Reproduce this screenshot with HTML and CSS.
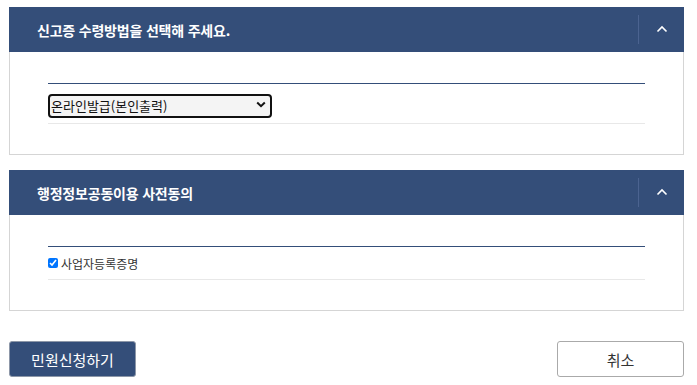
FILE: index.html
```html
<!DOCTYPE html>
<html lang="ko">
<head>
<meta charset="utf-8">
<link rel="stylesheet" href="styles.css">
</head>
<body>
<div class="page">
  <section class="panel">
    <div class="panel-head">
      <h2 class="panel-title">신고증 수령방법을 선택해 주세요.</h2>
      <button class="toggle" type="button" aria-label="접기">
        <svg width="12" height="8" viewBox="0 0 12 8"><path d="M1.5 6.5 L6 2 L10.5 6.5" fill="none" stroke="#fff" stroke-width="1.6"/></svg>
      </button>
    </div>
    <div class="panel-body">
      <div class="field-row">
        <div class="select-wrap">
          <select class="select">
            <option>온라인발급(본인출력)</option>
          </select>
          <svg class="select-arrow" width="10" height="7" viewBox="0 0 10 7"><path d="M1.2 1.5 L5 5.2 L8.8 1.5" fill="none" stroke="#111" stroke-width="2"/></svg>
        </div>
      </div>
    </div>
  </section>

  <section class="panel">
    <div class="panel-head">
      <h2 class="panel-title">행정정보공동이용 사전동의</h2>
      <button class="toggle" type="button" aria-label="접기">
        <svg width="12" height="8" viewBox="0 0 12 8"><path d="M1.5 6.5 L6 2 L10.5 6.5" fill="none" stroke="#fff" stroke-width="1.6"/></svg>
      </button>
    </div>
    <div class="panel-body">
      <div class="field-row check-row">
        <label class="check"><input type="checkbox" checked><span>사업자등록증명</span></label>
      </div>
    </div>
  </section>

  <div class="actions">
    <button class="btn btn-primary" type="button">민원신청하기</button>
    <button class="btn btn-default" type="button">취소</button>
  </div>
</div>
</body>
</html>
```

FILE: styles.css
```css
* { box-sizing: border-box; }
html, body { margin: 0; padding: 0; background: #fff; }
body {
  font-family: "Malgun Gothic", "Noto Sans CJK KR", "Noto Sans", sans-serif;
  color: #333;
}
.page {
  width: 675px;
  margin: 7px 0 0 9px;
}
.panel { margin-bottom: 15px; }
.panel-head {
  height: 45px;
  background: #344e79;
  display: flex;
  align-items: center;
}
.panel-title {
  flex: 1;
  margin: 0;
  padding-left: 28px;
  font-size: 14px;
  font-weight: 700;
  color: #fff;
  line-height: 20px;
  letter-spacing: -0.2px;
}
.toggle {
  width: 46px;
  height: 29px;
  border: 0;
  border-left: 1px solid #4b6390;
  background: transparent;
  padding: 0;
  display: flex;
  align-items: center;
  justify-content: center;
  cursor: pointer;
}
.toggle svg { margin-top: -2px; }
.panel-body {
  border: 1px solid #d5d5d5;
  border-top: 0;
  padding: 31px 38px 30px 38px;
}
.field-row {
  border-top: 1px solid #344e79;
  border-bottom: 1px solid #e8e8e8;
  padding: 8px 0 7px;
  display: flex;
  align-items: center;
}
.select-wrap {
  position: relative;
  width: 224px;
  height: 24px;
}
.select {
  appearance: none;
  -webkit-appearance: none;
  width: 100%;
  height: 100%;
  border: 2px solid #111;
  border-radius: 4px;
  background: #f4f4f4;
  font-family: inherit;
  font-size: 13px;
  color: #111;
  padding: 0 20px 0 1px;
  line-height: 20px;
  outline: none;
}
.select-arrow {
  position: absolute;
  right: 6px;
  top: 9px;
  pointer-events: none;
}
.check-row { height: 34px; padding: 0; }
.check {
  display: flex;
  align-items: center;
  font-size: 12px;
  color: #333;
}
.check input {
  width: 10px;
  height: 10px;
  margin: 0 3px 0 0;
  accent-color: #0075ff;
}
.actions {
  display: flex;
  justify-content: space-between;
  margin-top: 30px;
}
.btn {
  width: 127px;
  height: 36px;
  border-radius: 3px;
  font-family: inherit;
  font-size: 15px;
  cursor: pointer;
}
.btn-primary {
  background: #344e79;
  border: 1px solid #8d97a8;
  color: #fff;
}
.btn-default {
  background: #fff;
  border: 1px solid #aaa;
  color: #333;
}
```
